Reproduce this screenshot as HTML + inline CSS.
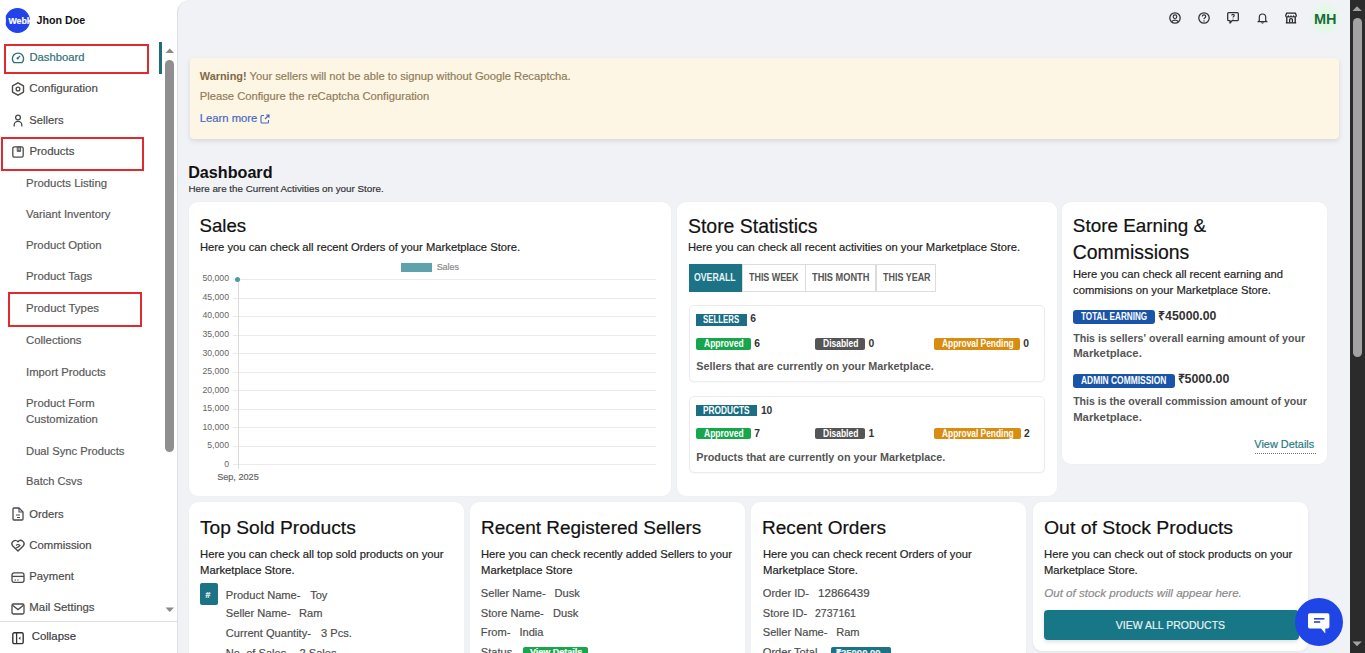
<!DOCTYPE html>
<html><head><meta charset="utf-8">
<style>
*{box-sizing:border-box;margin:0;padding:0}
html,body{width:1365px;height:653px;overflow:hidden;background:#fff;font-family:"Liberation Sans",sans-serif}
.a{position:absolute}
.t{position:absolute;line-height:1;white-space:nowrap;-webkit-text-stroke-width:0.18px}
#main{position:absolute;left:177px;top:0;width:1173px;height:653px;background:#f0f2f6;border-left:1px solid #dadde3;border-top-left-radius:13px}
.card{position:absolute;background:#fff;border-radius:9px;box-shadow:0 0 2px rgba(0,0,0,0.04)}
.redbox{position:absolute;border:2px solid #e02a2f}
.yl{position:absolute;right:1136px;font-size:8.7px;line-height:1;color:#666;white-space:nowrap}
.gl{position:absolute;left:233px;width:423px;height:1px;background:#e9e9e9}
.badge{position:absolute}
.box{position:absolute;border:1px solid #ececec;border-radius:5px;background:#fff;box-shadow:0 1px 2px rgba(0,0,0,0.03)}
.tab{position:absolute;top:264px;height:28px;border:1px solid #dcdcdc;background:#fff}
svg{position:absolute;overflow:visible}
</style></head><body>

<!-- sidebar -->
<div class="a" style="left:0;top:0;width:177px;height:653px;background:#fff"></div>
<div class="a" style="left:4.8px;top:8.2px;width:24.8px;height:25px;border-radius:50%;background:#2243ea;overflow:hidden">
  <div class="t" style="left:3.6px;top:9.3px;font-size:8.8px;font-weight:700;color:#fff">Webkul</div>
  <div class="a" style="left:0;top:8px;width:1.3px;height:9px;background:#fff"></div>
</div>
<div class="redbox" style="left:4px;top:44px;width:145px;height:30px"></div>
<div class="redbox" style="left:1px;top:137px;width:143px;height:34px"></div>
<div class="redbox" style="left:8px;top:292px;width:134px;height:35px"></div>
<div class="a" style="left:159px;top:42px;width:3px;height:32px;background:#1f6d7a"></div>
<!-- sidebar scrollbar -->
<svg style="left:165px;top:48px" width="10" height="6"><path d="M0.5 5 L4.75 0.5 L9 5 Z" fill="#8a8a8a"/></svg>
<div class="a" style="left:165px;top:60px;width:9px;height:392px;border-radius:5px;background:#8f8f8f"></div>
<svg style="left:165px;top:607px" width="10" height="6"><path d="M0.5 0.5 L4.75 5 L9 0.5 Z" fill="#8a8a8a"/></svg>
<div class="a" style="left:0;top:621px;width:177px;height:1px;background:#dedede"></div>

<!-- sidebar icons -->
<svg style="left:11px;top:51.5px" width="14" height="12" viewBox="0 0 14 12"><path d="M3 10.6 A5.6 5.6 0 1 1 11 10.6 Z" fill="none" stroke="#2e6e7b" stroke-width="1.4" stroke-linejoin="round"/><circle cx="6.6" cy="6.4" r="1.1" fill="#2e6e7b"/><path d="M6.6 6.4 L9 4" stroke="#2e6e7b" stroke-width="1.2"/></svg>
<svg style="left:11px;top:82px" width="14" height="14" viewBox="0 0 14 14"><path d="M7 0.8 L12.5 3.9 L12.5 10.1 L7 13.2 L1.5 10.1 L1.5 3.9 Z" fill="none" stroke="#4a4a4a" stroke-width="1.4" stroke-linejoin="round"/><circle cx="7" cy="7" r="1.9" fill="none" stroke="#4a4a4a" stroke-width="1.3"/></svg>
<svg style="left:12px;top:114px" width="12" height="13" viewBox="0 0 12 13"><circle cx="6" cy="3.5" r="2.4" fill="none" stroke="#4a4a4a" stroke-width="1.3"/><path d="M2.2 12.4 V10.8 A3.8 3.4 0 0 1 9.8 10.8 V12.4" fill="none" stroke="#4a4a4a" stroke-width="1.3"/></svg>
<svg style="left:12px;top:146px" width="12" height="12" viewBox="0 0 12 12"><rect x="0.8" y="0.8" width="10.4" height="10.4" rx="1.6" fill="none" stroke="#4a4a4a" stroke-width="1.3"/><path d="M5.2 1 V5.4 H8.6 V1 Z" fill="#4a4a4a" stroke="#4a4a4a" stroke-width="0.8"/><path d="M6.2 1.6 V4.4 M7.6 1.6 V4.4" stroke="#fff" stroke-width="0.6"/></svg>
<svg style="left:12px;top:507px" width="12" height="14" viewBox="0 0 12 14"><path d="M1 2 Q1 1 2 1 H7 L11 5 V12 Q11 13 10 13 H2 Q1 13 1 12 Z" fill="none" stroke="#4a4a4a" stroke-width="1.3"/><path d="M7 1 V5 H11" fill="none" stroke="#4a4a4a" stroke-width="1.1"/><path d="M4 8 H8 M5 10.5 H8" stroke="#4a4a4a" stroke-width="1"/></svg>
<svg style="left:11px;top:539px" width="14" height="13" viewBox="0 0 14 13"><path d="M7 12 L1.8 7 A3.2 3.2 0 0 1 7 2.8 A3.2 3.2 0 0 1 12.2 7 Z" fill="none" stroke="#4a4a4a" stroke-width="1.4" stroke-linejoin="round"/><path d="M5 6.5 Q7 4.5 9 6.5 Q7 8.5 5 9" fill="none" stroke="#4a4a4a" stroke-width="1.1"/></svg>
<svg style="left:11px;top:571.5px" width="14" height="12" viewBox="0 0 14 12"><rect x="1" y="0.9" width="12" height="9.4" rx="2" fill="none" stroke="#4a4a4a" stroke-width="1.3"/><path d="M1 4.4 H13" stroke="#4a4a4a" stroke-width="1.3"/><path d="M3.5 8 H5 M6.2 8 H7.6" stroke="#4a4a4a" stroke-width="1"/></svg>
<svg style="left:11px;top:603px" width="14" height="12" viewBox="0 0 14 12"><rect x="1" y="1" width="12" height="10" rx="1.4" fill="none" stroke="#4a4a4a" stroke-width="1.3"/><path d="M1.5 2.2 L7 6.6 L12.5 2.2" fill="none" stroke="#4a4a4a" stroke-width="1.3"/></svg>
<svg style="left:12px;top:631.5px" width="12" height="13" viewBox="0 0 12 13"><rect x="0.8" y="0.8" width="10.4" height="10.8" rx="1.4" fill="none" stroke="#333" stroke-width="1.4"/><path d="M4.6 1 V11.5" stroke="#333" stroke-width="1.3"/><path d="M8.4 4.4 L6.6 6.2 L8.4 8 Z" fill="#333"/></svg>

<!-- main -->
<div id="main"></div>

<!-- topbar icons -->
<svg style="left:1169px;top:12px" width="12" height="12" viewBox="0 0 12 12"><circle cx="6" cy="6" r="5.2" fill="none" stroke="#333" stroke-width="1.3"/><circle cx="6" cy="4.7" r="1.8" fill="none" stroke="#333" stroke-width="1.2"/><path d="M2.7 9.6 Q6 6.6 9.3 9.6" fill="none" stroke="#333" stroke-width="1.3"/></svg>
<svg style="left:1198px;top:12px" width="12" height="12" viewBox="0 0 12 12"><circle cx="6" cy="6" r="5.2" fill="none" stroke="#333" stroke-width="1.3"/><path d="M4.3 4.6 Q4.3 2.9 6 2.9 Q7.7 2.9 7.7 4.5 Q7.7 5.5 6.6 6 Q6 6.3 6 7.3" fill="none" stroke="#333" stroke-width="1.2"/><circle cx="6" cy="9" r="0.7" fill="#333"/></svg>
<svg style="left:1227px;top:12px" width="12" height="12" viewBox="0 0 12 12"><path d="M1.7 0.7 H10.3 Q11.3 0.7 11.3 1.7 V7.7 Q11.3 8.7 10.3 8.7 H5 L3 11 V8.7 H1.7 Q0.7 8.7 0.7 7.7 V1.7 Q0.7 0.7 1.7 0.7 Z" fill="none" stroke="#333" stroke-width="1.3" stroke-linejoin="round"/><path d="M4.7 3.6 Q4.7 2.4 6 2.4 Q7.3 2.4 7.3 3.5 Q7.3 4.2 6.5 4.6 Q6 4.9 6 5.6" fill="none" stroke="#333" stroke-width="1.1"/><circle cx="6" cy="7" r="0.6" fill="#333"/></svg>
<svg style="left:1256.5px;top:12px" width="11" height="12" viewBox="0 0 11 12"><path d="M2.3 8.7 V5.4 A3.2 3.4 0 0 1 8.7 5.4 V8.7 L10 9.7 H1 Z" fill="none" stroke="#333" stroke-width="1.2" stroke-linejoin="round"/><path d="M4.3 10.5 Q5.5 11.8 6.7 10.5" fill="none" stroke="#333" stroke-width="1.1"/></svg>
<svg style="left:1285px;top:12px" width="12" height="12" viewBox="0 0 12 12"><path d="M1.5 1.2 H10.5 L11.3 3.8 Q11.3 5 10 5 Q8.6 5 8.6 3.8 Q8.6 5 7.2 5 Q6 5 6 3.8 Q6 5 4.7 5 Q3.4 5 3.4 3.8 Q3.4 5 2 5 Q0.7 5 0.7 3.8 Z" fill="none" stroke="#222" stroke-width="1.2" stroke-linejoin="round"/><path d="M1.8 5 V10.6 M10.2 5 V10.6 M0.8 10.8 H11.2" stroke="#222" stroke-width="1.3"/><path d="M4.6 10.6 V7.6 Q4.6 6.6 6 6.6 Q7.4 6.6 7.4 7.6 V10.6" fill="none" stroke="#222" stroke-width="1.2"/></svg>
<div class="a" style="left:1309px;top:3px;width:32px;height:32px;border-radius:50%;background:radial-gradient(circle,#dff9e4 0%,#e4f8e8 50%,#eaf5ee 62%,rgba(240,242,246,0) 71%)"></div>

<!-- page scrollbar -->
<div class="a" style="left:1350px;top:0;width:15px;height:653px;background:#2b2b2b"></div>
<svg style="left:1352px;top:6px" width="11" height="6"><path d="M0.5 5 L5 0.3 L9.8 5 Z" fill="#a3a3a3"/></svg>
<div class="a" style="left:1353px;top:18px;width:9px;height:339px;border-radius:5px;background:#a3a3a3"></div>
<svg style="left:1352px;top:641px" width="11" height="6"><path d="M0.5 0.5 L5 5.2 L9.8 0.5 Z" fill="#a3a3a3"/></svg>

<!-- warning -->
<div class="a" style="left:190px;top:58px;width:1149px;height:81px;background:#fdf6e4;border-radius:4px;box-shadow:0 2px 5px rgba(0,0,0,0.11)"></div>
<svg style="left:259.5px;top:113.5px" width="10" height="10" viewBox="0 0 10 10"><path d="M4 1.5 H2 Q1 1.5 1 2.5 V8 Q1 9 2 9 H7.5 Q8.5 9 8.5 8 V6" fill="none" stroke="#4666c8" stroke-width="1.1"/><path d="M5 5 L9 1 M6.2 1 H9 V3.8" fill="none" stroke="#4666c8" stroke-width="1.1"/></svg>

<!-- cards row1 -->
<div class="card" style="left:189px;top:202px;width:482px;height:294px"></div>
<div class="card" style="left:677px;top:202px;width:380px;height:294px"></div>
<div class="card" style="left:1062px;top:202px;width:265px;height:262px"></div>
<!-- cards row2 -->
<div class="card" style="left:189px;top:502px;width:275px;height:200px"></div>
<div class="card" style="left:470px;top:502px;width:275px;height:200px"></div>
<div class="card" style="left:751px;top:502px;width:275px;height:200px"></div>
<div class="card" style="left:1033px;top:502px;width:275px;height:149px;box-shadow:0 1px 3px rgba(0,0,0,0.06)"></div>

<!-- chart -->
<div class="a" style="left:401px;top:263px;width:31px;height:9px;background:#5ea3ab"></div>
<div class='gl' style='top:279.10px'></div>
<div class='gl' style='top:297.63px'></div>
<div class='gl' style='top:316.16px'></div>
<div class='gl' style='top:334.69px'></div>
<div class='gl' style='top:353.22px'></div>
<div class='gl' style='top:371.75px'></div>
<div class='gl' style='top:390.28px'></div>
<div class='gl' style='top:408.81px'></div>
<div class='gl' style='top:427.34px'></div>
<div class='gl' style='top:445.87px'></div>
<div class='gl' style='top:464.40px'></div>
<div class="a" style="left:237.7px;top:279px;width:1px;height:190px;background:#dcdcdc"></div>
<div class="a" style="left:235px;top:277px;width:5.4px;height:5.4px;border-radius:50%;background:#4e9aa3"></div>
<div class='yl' style='top:274.40px'>50,000</div>
<div class='yl' style='top:292.93px'>45,000</div>
<div class='yl' style='top:311.46px'>40,000</div>
<div class='yl' style='top:329.99px'>35,000</div>
<div class='yl' style='top:348.52px'>30,000</div>
<div class='yl' style='top:367.05px'>25,000</div>
<div class='yl' style='top:385.58px'>20,000</div>
<div class='yl' style='top:404.11px'>15,000</div>
<div class='yl' style='top:422.64px'>10,000</div>
<div class='yl' style='top:441.17px'>5,000</div>
<div class='yl' style='top:459.70px'>0</div>

<!-- tabs -->
<div class="tab" style="left:689px;width:53px;background:#1b7385;border-color:#1b7385"></div>
<div class="tab" style="left:742px;width:64px"></div>
<div class="tab" style="left:805px;width:71px"></div>
<div class="tab" style="left:876px;width:60px"></div>

<!-- stat boxes -->
<div class="box" style="left:689px;top:304.5px;width:356px;height:77px"></div>
<div class="box" style="left:689px;top:395.5px;width:356px;height:77.5px"></div>
<div class="badge" style="left:696px;top:313.6px;width:51.3px;height:12.9px;background:#1b6e84"></div>
<div class="badge" style="left:696px;top:337.6px;width:55.2px;height:12.1px;background:#18a64c;border-radius:2px"></div>
<div class="badge" style="left:815.2px;top:337.6px;width:49.8px;height:12.1px;background:#555;border-radius:2px"></div>
<div class="badge" style="left:934.1px;top:337.6px;width:85.8px;height:12.1px;background:#d88c10;border-radius:2px"></div>
<div class="badge" style="left:696px;top:404.6px;width:61.1px;height:11.9px;background:#1b6e84"></div>
<div class="badge" style="left:696px;top:427.6px;width:55.2px;height:11.8px;background:#18a64c;border-radius:2px"></div>
<div class="badge" style="left:815.2px;top:427.6px;width:49.8px;height:11.8px;background:#555;border-radius:2px"></div>
<div class="badge" style="left:934.1px;top:427.6px;width:86.8px;height:11.8px;background:#d88c10;border-radius:2px"></div>

<!-- earning badges -->
<div class="badge" style="left:1073px;top:309.6px;width:81.6px;height:14.9px;background:#1a54a8;border-radius:3px"></div>
<div class="badge" style="left:1073px;top:373.7px;width:101.6px;height:14.5px;background:#1a54a8;border-radius:3px"></div>
<div class="a" style="left:1254.5px;top:452.5px;width:61.5px;height:0;border-top:1px dotted #777"></div>

<!-- row2 details -->
<div class="a" style="left:199.8px;top:583.2px;width:18.1px;height:21.6px;background:#1b7385;border-radius:2px"></div>
<div class="t" style="left:205.6px;top:591.3px;font-size:8.6px;font-weight:700;color:#e8f4f6">#</div>
<div class="badge" style="left:523.3px;top:646.7px;width:65px;height:12px;background:#18a64c;border-radius:2px"></div>
<div class="t" style="left:530px;top:648px;font-size:9px;font-weight:700;color:#fff">View Details</div>
<div class="badge" style="left:831.2px;top:646.7px;width:59.8px;height:12px;background:#1b7385;border-radius:2px"></div>
<div class="t" style="left:836px;top:648px;font-size:9.5px;font-weight:700;color:#e8f4f6">₹25000.00</div>
<div class="a" style="left:1044px;top:609.8px;width:254.7px;height:30.1px;background:#187786;border-radius:4px;box-shadow:0 2px 4px rgba(0,0,0,0.12)"></div>

<div class='t' style='left:36.57px;top:15.16px;font-size:10.68px;font-weight:700;color:#111;-webkit-text-stroke-width:0;'>Jhon Doe</div>
<div class='t' style='left:29.45px;top:51.65px;font-size:11.28px;font-weight:400;color:#2e6e7b;'>Dashboard</div>
<div class='t' style='left:29.34px;top:82.53px;font-size:11.54px;font-weight:400;color:#4a4a4a;'>Configuration</div>
<div class='t' style='left:29.35px;top:114.84px;font-size:11.18px;font-weight:400;color:#4a4a4a;'>Sellers</div>
<div class='t' style='left:29.44px;top:145.53px;font-size:11.42px;font-weight:400;color:#4a4a4a;'>Products</div>
<div class='t' style='left:26.04px;top:177.85px;font-size:11.40px;font-weight:400;color:#585858;'>Products Listing</div>
<div class='t' style='left:26.05px;top:209.28px;font-size:11.25px;font-weight:400;color:#585858;'>Variant Inventory</div>
<div class='t' style='left:26.05px;top:240.42px;font-size:11.32px;font-weight:400;color:#585858;'>Product Option</div>
<div class='t' style='left:26.05px;top:271.28px;font-size:11.36px;font-weight:400;color:#585858;'>Product Tags</div>
<div class='t' style='left:26.04px;top:303.40px;font-size:11.46px;font-weight:400;color:#585858;'>Product Types</div>
<div class='t' style='left:26.05px;top:334.89px;font-size:11.35px;font-weight:400;color:#585858;'>Collections</div>
<div class='t' style='left:26.05px;top:367.05px;font-size:11.29px;font-weight:400;color:#585858;'>Import Products</div>
<div class='t' style='left:26.05px;top:398.00px;font-size:11.34px;font-weight:400;color:#585858;'>Product Form</div>
<div class='t' style='left:26.05px;top:413.69px;font-size:11.35px;font-weight:400;color:#585858;'>Customization</div>
<div class='t' style='left:26.05px;top:446.11px;font-size:11.21px;font-weight:400;color:#585858;'>Dual Sync Products</div>
<div class='t' style='left:26.06px;top:476.49px;font-size:11.12px;font-weight:400;color:#585858;'>Batch Csvs</div>
<div class='t' style='left:29.35px;top:508.74px;font-size:11.18px;font-weight:400;color:#4a4a4a;'>Orders</div>
<div class='t' style='left:29.35px;top:539.51px;font-size:11.33px;font-weight:400;color:#4a4a4a;'>Commission</div>
<div class='t' style='left:29.35px;top:571.36px;font-size:11.27px;font-weight:400;color:#4a4a4a;'>Payment</div>
<div class='t' style='left:29.34px;top:602.15px;font-size:11.40px;font-weight:400;color:#4a4a4a;'>Mail Settings</div>
<div class='t' style='left:31.74px;top:630.95px;font-size:11.40px;font-weight:400;color:#3a3a3a;'>Collapse</div>
<div class='t' style='left:1313.79px;top:11.40px;font-size:15.36px;font-weight:700;color:#1d6b3c;transform:scaleX(0.943);transform-origin:0 0;-webkit-text-stroke-width:0;'>MH</div>
<div class='t' style='left:199.76px;top:71.25px;font-size:10.92px;font-weight:700;color:#7d6a45;-webkit-text-stroke-width:0;'>Warning!</div>
<div class='t' style='left:249.55px;top:70.82px;font-size:11.19px;font-weight:400;color:#8f7d58;'>Your sellers will not be able to signup without Google Recaptcha.</div>
<div class='t' style='left:199.75px;top:91.49px;font-size:11.23px;font-weight:400;color:#8f7d58;'>Please Configure the reCaptcha Configuration</div>
<div class='t' style='left:199.75px;top:112.67px;font-size:11.25px;font-weight:400;color:#4666c8;'>Learn more</div>
<div class='t' style='left:188.15px;top:163.71px;font-size:16.17px;font-weight:700;color:#111;-webkit-text-stroke-width:0;'>Dashboard</div>
<div class='t' style='left:188.41px;top:183.98px;font-size:9.82px;font-weight:400;color:#333;'>Here are the Current Activities on your Store.</div>
<div class='t' style='left:199.45px;top:216.79px;font-size:18.67px;font-weight:400;color:#111;-webkit-text-stroke:0.2px #111;'>Sales</div>
<div class='t' style='left:199.75px;top:241.76px;font-size:11.15px;font-weight:400;color:#222;transform:scaleX(1.008);transform-origin:0 0;'>Here you can check all recent Orders of your Marketplace Store.</div>
<div class='t' style='left:436.64px;top:263.01px;font-size:8.97px;font-weight:400;color:#888;'>Sales</div>
<div class='t' style='left:217.13px;top:473.36px;font-size:9.15px;font-weight:400;color:#666;'>Sep, 2025</div>
<div class='t' style='left:688.02px;top:216.67px;font-size:19.41px;font-weight:400;color:#111;-webkit-text-stroke:0.2px #111;'>Store Statistics</div>
<div class='t' style='left:688.35px;top:241.76px;font-size:11.15px;font-weight:400;color:#222;transform:scaleX(1.008);transform-origin:0 0;'>Here you can check all recent activities on your Marketplace Store.</div>
<div class='t' style='left:696.37px;top:361.07px;font-size:10.79px;font-weight:700;color:#555;-webkit-text-stroke-width:0;'>Sellers that are currently on your Marketplace.</div>
<div class='t' style='left:696.37px;top:451.76px;font-size:10.80px;font-weight:700;color:#555;-webkit-text-stroke-width:0;'>Products that are currently on your Marketplace.</div>
<div class='t' style='left:750.29px;top:314.48px;font-size:10.30px;font-weight:700;color:#333;-webkit-text-stroke-width:0;'>6</div>
<div class='t' style='left:754.19px;top:338.58px;font-size:10.30px;font-weight:700;color:#333;-webkit-text-stroke-width:0;'>6</div>
<div class='t' style='left:868.39px;top:338.58px;font-size:10.30px;font-weight:700;color:#333;-webkit-text-stroke-width:0;'>0</div>
<div class='t' style='left:1023.19px;top:338.58px;font-size:10.30px;font-weight:700;color:#333;-webkit-text-stroke-width:0;'>0</div>
<div class='t' style='left:760.89px;top:405.58px;font-size:10.30px;font-weight:700;color:#333;-webkit-text-stroke-width:0;'>10</div>
<div class='t' style='left:754.19px;top:428.58px;font-size:10.30px;font-weight:700;color:#333;-webkit-text-stroke-width:0;'>7</div>
<div class='t' style='left:868.59px;top:428.58px;font-size:10.30px;font-weight:700;color:#333;-webkit-text-stroke-width:0;'>1</div>
<div class='t' style='left:1023.89px;top:428.58px;font-size:10.30px;font-weight:700;color:#333;-webkit-text-stroke-width:0;'>2</div>
<div class='t' style='left:1072.85px;top:217.12px;font-size:18.87px;font-weight:400;color:#111;-webkit-text-stroke:0.2px #111;'>Store Earning &amp;</div>
<div class='t' style='left:1072.82px;top:243.27px;font-size:19.41px;font-weight:400;color:#111;-webkit-text-stroke:0.2px #111;'>Commissions</div>
<div class='t' style='left:1073.15px;top:268.76px;font-size:11.15px;font-weight:400;color:#222;transform:scaleX(1.006);transform-origin:0 0;'>Here you can check all recent earning and</div>
<div class='t' style='left:1073.15px;top:284.56px;font-size:11.15px;font-weight:400;color:#222;transform:scaleX(1.012);transform-origin:0 0;'>commisions on your Marketplace Store.</div>
<div class='t' style='left:1158.11px;top:309.68px;font-size:12.31px;font-weight:700;color:#333;-webkit-text-stroke-width:0;'>₹45000.00</div>
<div class='t' style='left:1073.17px;top:333.38px;font-size:10.65px;font-weight:700;color:#555;-webkit-text-stroke-width:0;'>This is sellers' overall earning amount of your</div>
<div class='t' style='left:1073.15px;top:347.81px;font-size:11.33px;font-weight:700;color:#555;-webkit-text-stroke-width:0;'>Marketplace.</div>
<div class='t' style='left:1177.50px;top:373.37px;font-size:12.44px;font-weight:700;color:#333;-webkit-text-stroke-width:0;'>₹5000.00</div>
<div class='t' style='left:1073.18px;top:396.26px;font-size:10.57px;font-weight:700;color:#555;-webkit-text-stroke-width:0;'>This is the overall commission amount of your</div>
<div class='t' style='left:1073.15px;top:411.51px;font-size:11.33px;font-weight:700;color:#555;-webkit-text-stroke-width:0;'>Marketplace.</div>
<div class='t' style='left:1254.36px;top:439.05px;font-size:10.93px;font-weight:400;color:#2a7986;'>View Details</div>
<div class='t' style='left:200.44px;top:517.73px;font-size:19.10px;font-weight:400;color:#111;transform:scaleX(1.005);transform-origin:0 0;-webkit-text-stroke:0.2px #111;'>Top Sold Products</div>
<div class='t' style='left:480.54px;top:517.73px;font-size:19.10px;font-weight:400;color:#111;transform:scaleX(0.993);transform-origin:0 0;-webkit-text-stroke:0.2px #111;'>Recent Registered Sellers</div>
<div class='t' style='left:762.44px;top:517.73px;font-size:19.10px;font-weight:400;color:#111;transform:scaleX(0.998);transform-origin:0 0;-webkit-text-stroke:0.2px #111;'>Recent Orders</div>
<div class='t' style='left:1043.94px;top:517.73px;font-size:19.10px;font-weight:400;color:#111;transform:scaleX(1.018);transform-origin:0 0;-webkit-text-stroke:0.2px #111;'>Out of Stock Products</div>
<div class='t' style='left:199.75px;top:549.46px;font-size:11.15px;font-weight:400;color:#222;transform:scaleX(1.011);transform-origin:0 0;'>Here you can check all top sold products on your</div>
<div class='t' style='left:199.75px;top:565.36px;font-size:11.15px;font-weight:400;color:#222;transform:scaleX(1.012);transform-origin:0 0;'>Marketplace Store.</div>
<div class='t' style='left:480.85px;top:549.46px;font-size:11.15px;font-weight:400;color:#222;transform:scaleX(1.008);transform-origin:0 0;'>Here you can check recently added Sellers to your</div>
<div class='t' style='left:480.85px;top:565.36px;font-size:11.15px;font-weight:400;color:#222;transform:scaleX(1.012);transform-origin:0 0;'>Marketplace Store</div>
<div class='t' style='left:762.75px;top:549.46px;font-size:11.15px;font-weight:400;color:#222;transform:scaleX(1.009);transform-origin:0 0;'>Here you can check recent Orders of your</div>
<div class='t' style='left:762.75px;top:565.36px;font-size:11.15px;font-weight:400;color:#222;transform:scaleX(1.015);transform-origin:0 0;'>Marketplace Store.</div>
<div class='t' style='left:1044.25px;top:549.46px;font-size:11.15px;font-weight:400;color:#222;transform:scaleX(1.015);transform-origin:0 0;'>Here you can check out of stock products on your</div>
<div class='t' style='left:1044.25px;top:565.36px;font-size:11.15px;font-weight:400;color:#222;transform:scaleX(1.002);transform-origin:0 0;'>Marketplace Store.</div>
<div class='t' style='left:225.86px;top:589.60px;font-size:11.10px;font-weight:400;color:#4d4d4d;'>Product Name-</div>
<div class='t' style='left:310.16px;top:589.60px;font-size:11.10px;font-weight:400;color:#4d4d4d;'>Toy</div>
<div class='t' style='left:225.86px;top:608.40px;font-size:11.10px;font-weight:400;color:#4d4d4d;'>Seller Name-</div>
<div class='t' style='left:299.06px;top:608.40px;font-size:11.10px;font-weight:400;color:#4d4d4d;'>Ram</div>
<div class='t' style='left:225.86px;top:628.40px;font-size:11.10px;font-weight:400;color:#4d4d4d;'>Current Quantity-</div>
<div class='t' style='left:321.06px;top:628.40px;font-size:11.10px;font-weight:400;color:#4d4d4d;'>3 Pcs.</div>
<div class='t' style='left:225.86px;top:647.70px;font-size:11.10px;font-weight:400;color:#4d4d4d;'>No. of Sales-</div>
<div class='t' style='left:299.56px;top:647.70px;font-size:11.10px;font-weight:400;color:#4d4d4d;'>2 Sales</div>
<div class='t' style='left:480.86px;top:588.00px;font-size:11.10px;font-weight:400;color:#4d4d4d;'>Seller Name-</div>
<div class='t' style='left:554.56px;top:588.00px;font-size:11.10px;font-weight:400;color:#4d4d4d;'>Dusk</div>
<div class='t' style='left:480.86px;top:608.40px;font-size:11.10px;font-weight:400;color:#4d4d4d;'>Store Name-</div>
<div class='t' style='left:552.96px;top:608.40px;font-size:11.10px;font-weight:400;color:#4d4d4d;'>Dusk</div>
<div class='t' style='left:480.86px;top:627.20px;font-size:11.10px;font-weight:400;color:#4d4d4d;'>From-</div>
<div class='t' style='left:519.46px;top:627.20px;font-size:11.10px;font-weight:400;color:#4d4d4d;'>India</div>
<div class='t' style='left:480.86px;top:647.20px;font-size:11.10px;font-weight:400;color:#4d4d4d;'>Status-</div>
<div class='t' style='left:762.76px;top:588.00px;font-size:11.10px;font-weight:400;color:#4d4d4d;'>Order ID-</div>
<div class='t' style='left:817.56px;top:588.00px;font-size:11.10px;font-weight:400;color:#4d4d4d;transform:scaleX(1.045);transform-origin:0 0;'>12866439</div>
<div class='t' style='left:762.76px;top:608.40px;font-size:11.10px;font-weight:400;color:#4d4d4d;'>Store ID-</div>
<div class='t' style='left:815.36px;top:608.40px;font-size:11.10px;font-weight:400;color:#4d4d4d;transform:scaleX(0.948);transform-origin:0 0;'>2737161</div>
<div class='t' style='left:762.76px;top:627.20px;font-size:11.10px;font-weight:400;color:#4d4d4d;'>Seller Name-</div>
<div class='t' style='left:836.16px;top:627.20px;font-size:11.10px;font-weight:400;color:#4d4d4d;'>Ram</div>
<div class='t' style='left:762.76px;top:647.20px;font-size:11.10px;font-weight:400;color:#4d4d4d;'>Order Total-</div>
<div class='t' style='left:1044.24px;top:587.59px;font-size:11.59px;font-weight:400;color:#8a8a8a;font-style:italic;'>Out of stock products will appear here.</div>
<div class='t' style='left:1115.78px;top:620.31px;font-size:10.51px;font-weight:400;color:#e6f3f4;'>VIEW ALL PRODUCTS</div>
<div class='t' style='left:703.40px;top:314.74px;font-size:10.00px;font-weight:700;color:#ffffff;transform:scaleX(0.783);transform-origin:0 0;-webkit-text-stroke-width:0;'>SELLERS</div>
<div class='t' style='left:703.80px;top:338.84px;font-size:10.00px;font-weight:700;color:#ffffff;transform:scaleX(0.849);transform-origin:0 0;-webkit-text-stroke-width:0;'>Approved</div>
<div class='t' style='left:822.50px;top:338.84px;font-size:10.00px;font-weight:700;color:#ffffff;transform:scaleX(0.849);transform-origin:0 0;-webkit-text-stroke-width:0;'>Disabled</div>
<div class='t' style='left:941.50px;top:338.84px;font-size:10.00px;font-weight:700;color:#ffffff;transform:scaleX(0.837);transform-origin:0 0;-webkit-text-stroke-width:0;'>Approval Pending</div>
<div class='t' style='left:703.40px;top:405.84px;font-size:10.00px;font-weight:700;color:#ffffff;transform:scaleX(0.830);transform-origin:0 0;-webkit-text-stroke-width:0;'>PRODUCTS</div>
<div class='t' style='left:703.80px;top:428.84px;font-size:10.00px;font-weight:700;color:#ffffff;transform:scaleX(0.849);transform-origin:0 0;-webkit-text-stroke-width:0;'>Approved</div>
<div class='t' style='left:822.50px;top:428.84px;font-size:10.00px;font-weight:700;color:#ffffff;transform:scaleX(0.849);transform-origin:0 0;-webkit-text-stroke-width:0;'>Disabled</div>
<div class='t' style='left:941.50px;top:428.84px;font-size:10.00px;font-weight:700;color:#ffffff;transform:scaleX(0.837);transform-origin:0 0;-webkit-text-stroke-width:0;'>Approval Pending</div>
<div class='t' style='left:1080.90px;top:312.44px;font-size:10.00px;font-weight:700;color:#ffffff;transform:scaleX(0.816);transform-origin:0 0;-webkit-text-stroke-width:0;'>TOTAL EARNING</div>
<div class='t' style='left:1080.90px;top:375.84px;font-size:10.00px;font-weight:700;color:#ffffff;transform:scaleX(0.844);transform-origin:0 0;-webkit-text-stroke-width:0;'>ADMIN COMMISSION</div>
<div class='t' style='left:694.10px;top:272.74px;font-size:10.00px;font-weight:700;color:#e8f4f6;transform:scaleX(0.871);transform-origin:0 0;-webkit-text-stroke-width:0;'>OVERALL</div>
<div class='t' style='left:749.00px;top:272.74px;font-size:10.00px;font-weight:700;color:#555;transform:scaleX(0.891);transform-origin:0 0;-webkit-text-stroke-width:0;'>THIS WEEK</div>
<div class='t' style='left:811.80px;top:272.74px;font-size:10.00px;font-weight:700;color:#555;transform:scaleX(0.923);transform-origin:0 0;-webkit-text-stroke-width:0;'>THIS MONTH</div>
<div class='t' style='left:882.70px;top:272.74px;font-size:10.00px;font-weight:700;color:#555;transform:scaleX(0.895);transform-origin:0 0;-webkit-text-stroke-width:0;'>THIS YEAR</div>

<!-- chat bubble -->
<div class="a" style="left:1294.5px;top:598.2px;width:48.2px;height:48px;border-radius:50%;background:#1f45e6"></div>
<svg style="left:1307.5px;top:612.5px" width="22" height="21" viewBox="0 0 22 21"><path d="M1.6 0.3 H19.6 Q21.4 0.3 21.4 2 V13.8 Q21.4 15.5 19.6 15.5 H17.3 L17.3 20.5 L13 15.5 H1.6 Q0 15.5 0 13.8 V2 Q0 0.3 1.6 0.3 Z" fill="#fff"/><path d="M6 5.8 H16.4" stroke="#2a47c8" stroke-width="1.6"/><path d="M6 9 H12.2" stroke="#2a47c8" stroke-width="1.6"/></svg>

</body></html>
